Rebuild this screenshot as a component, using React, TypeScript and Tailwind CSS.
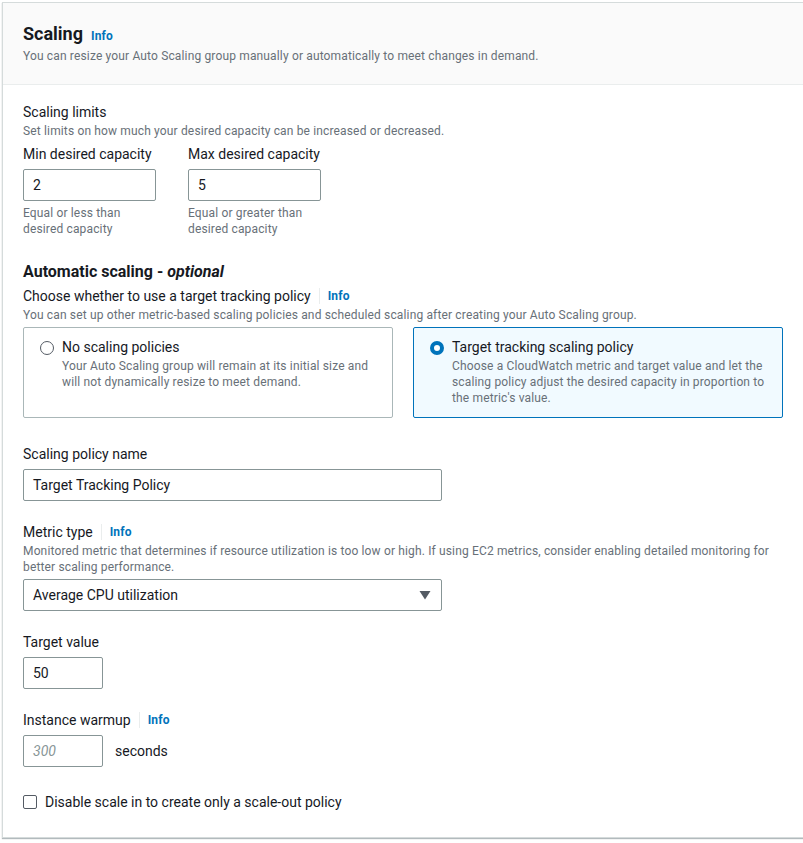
import React from 'react';

const font = { fontFamily: 'Roboto, "Noto Sans", sans-serif' };

function Info() {
  return <span className="text-[12px] font-bold text-[#0073bb] leading-[16px] tracking-[0.15px]">Info</span>;
}

function LabelWithInfo({ text }: { text: string }) {
  return <div className="flex items-center text-[14px] leading-[22px] text-[#16191f]">
    <span>{text}</span>
    <span className="mx-[8px] h-[16px] w-px bg-[#eaeded]" />
    <Info />
  </div>;
}

function Radio({ checked }: { checked: boolean }) {
  return checked
    ? <span className="mt-[4px] h-[14px] w-[14px] shrink-0 rounded-full border-[4px] border-[#0073bb] bg-white" />
    : <span className="mt-[4px] h-[14px] w-[14px] shrink-0 rounded-full border-[1.5px] border-[#545b64] bg-white" />;
}

function Tile({ title, desc, checked }: { title: string; desc: string; checked: boolean }) {
  return <div className={`flex gap-[8px] rounded-[2px] border px-[16px] pt-[9px] pb-[11px] ${checked ? 'border-[#0073bb] bg-[#f1faff]' : 'border-[#aab7b8] bg-white'}`}>
    <Radio checked={checked} />
    <div>
      <div className="text-[14px] leading-[21px] text-[#16191f]">{title}</div>
      <div className="text-[12px] leading-[16px] tracking-[0.15px] text-[#687078]">{desc}</div>
    </div>
  </div>;
}

function TextBox({ value, className, placeholder }: { value?: string; className: string; placeholder?: string }) {
  return <div className={`flex h-[32px] items-center rounded-[2px] border border-[#879596] bg-white px-[9px] text-[14px] ${className}`}>
    {placeholder
      ? <span className="italic text-[#879596]">{placeholder}</span>
      : <span className="text-[#16191f]">{value}</span>}
  </div>;
}

export default function App() {
  return <div className="h-[843px] w-[803px] overflow-hidden bg-white pl-[2px] pt-[2px]" style={font}>
    <div className="w-[830px] border border-[#d5dbdb] bg-white shadow-[0_1px_1px_0_rgba(0,28,36,0.3)]">
      {/* Header */}
      <div className="border-b border-[#eaeded] bg-[#fafafa] px-[20px] pt-[20px] pb-[20px]">
        <div className="flex items-baseline gap-[8px]">
          <h2 className="text-[18px] font-bold leading-[22px] text-[#16191f]">Scaling</h2>
          <Info />
        </div>
        <p className="mt-[3px] text-[12px] leading-[16px] tracking-[0.15px] text-[#687078]">You can resize your Auto Scaling group manually or automatically to meet changes in demand.</p>
      </div>

      {/* Body */}
      <div className="w-[760px] px-[20px] pt-[16px] pb-[24px] box-content">
        <div className="text-[14px] leading-[22px] text-[#16191f]">Scaling limits</div>
        <div className="text-[12px] leading-[16px] tracking-[0.15px] text-[#687078]">Set limits on how much your desired capacity can be increased or decreased.</div>
        <div className="mt-[4px] flex gap-[32px]">
          {[['Min desired capacity', '2', 'Equal or less than', 'desired capacity'], ['Max desired capacity', '5', 'Equal or greater than', 'desired capacity']].map(f => <div key={f[0]} className="w-[133px]">
            <div className="text-[14px] leading-[22px] text-[#16191f]">{f[0]}</div>
            <TextBox value={f[1]} className="mt-[4px] w-[133px] h-[32px]" />
            <div className="mt-[4px] text-[12px] leading-[16px] tracking-[0.15px] text-[#687078]">{f[2]}<br />{f[3]}</div>
          </div>)}
        </div>

        <h3 className="mt-[24px] text-[16px] font-bold leading-[22px] text-[#16191f]">Automatic scaling - <i>optional</i></h3>
        <div className="mt-[2px]"><LabelWithInfo text="Choose whether to use a target tracking policy" /></div>
        <div className="text-[12px] leading-[16px] tracking-[0.15px] text-[#687078]">You can set up other metric-based scaling policies and scheduled scaling after creating your Auto Scaling group.</div>
        <div className="mt-[4px] grid grid-cols-2 gap-[20px]">
          <Tile checked={false} title="No scaling policies" desc="Your Auto Scaling group will remain at its initial size and will not dynamically resize to meet demand." />
          <Tile checked title="Target tracking scaling policy" desc="Choose a CloudWatch metric and target value and let the scaling policy adjust the desired capacity in proportion to the metric's value." />
        </div>

        <div className="mt-[25px] text-[14px] leading-[22px] text-[#16191f]">Scaling policy name</div>
        <TextBox value="Target Tracking Policy" className="mt-[4px] w-[419px]" />

        <div className="mt-[20px]"><LabelWithInfo text="Metric type" /></div>
        <div className="text-[12px] leading-[16px] tracking-[0.15px] text-[#687078]">Monitored metric that determines if resource utilization is too low or high. If using EC2 metrics, consider enabling detailed monitoring for better scaling performance.</div>
        <div className="mt-[4px] flex h-[32px] w-[419px] items-center justify-between rounded-[2px] border border-[#879596] bg-white pl-[9px] pr-[10px] text-[14px] text-[#16191f]">
          <span>Average CPU utilization</span>
          <svg width="12" height="10" viewBox="0 0 12 10"><path d="M0.5 1h11L6 9.5z" fill="#545b64" /></svg>
        </div>

        <div className="mt-[20px] text-[14px] leading-[22px] text-[#16191f]">Target value</div>
        <TextBox value="50" className="mt-[4px] w-[80px]" />

        <div className="mt-[20px]"><LabelWithInfo text="Instance warmup" /></div>
        <div className="mt-[4px] flex items-center gap-[12px]">
          <TextBox placeholder="300" className="w-[80px]" />
          <span className="text-[14px] text-[#16191f]">seconds</span>
        </div>

        <label className="mt-[24px] flex items-center gap-[8px] text-[14px] leading-[22px] text-[#16191f]">
          <span className="h-[14px] w-[14px] rounded-[2px] border-[1.5px] border-[#545b64] bg-white" />
          Disable scale in to create only a scale-out policy
        </label>
      </div>
    </div>
  </div>;
}
